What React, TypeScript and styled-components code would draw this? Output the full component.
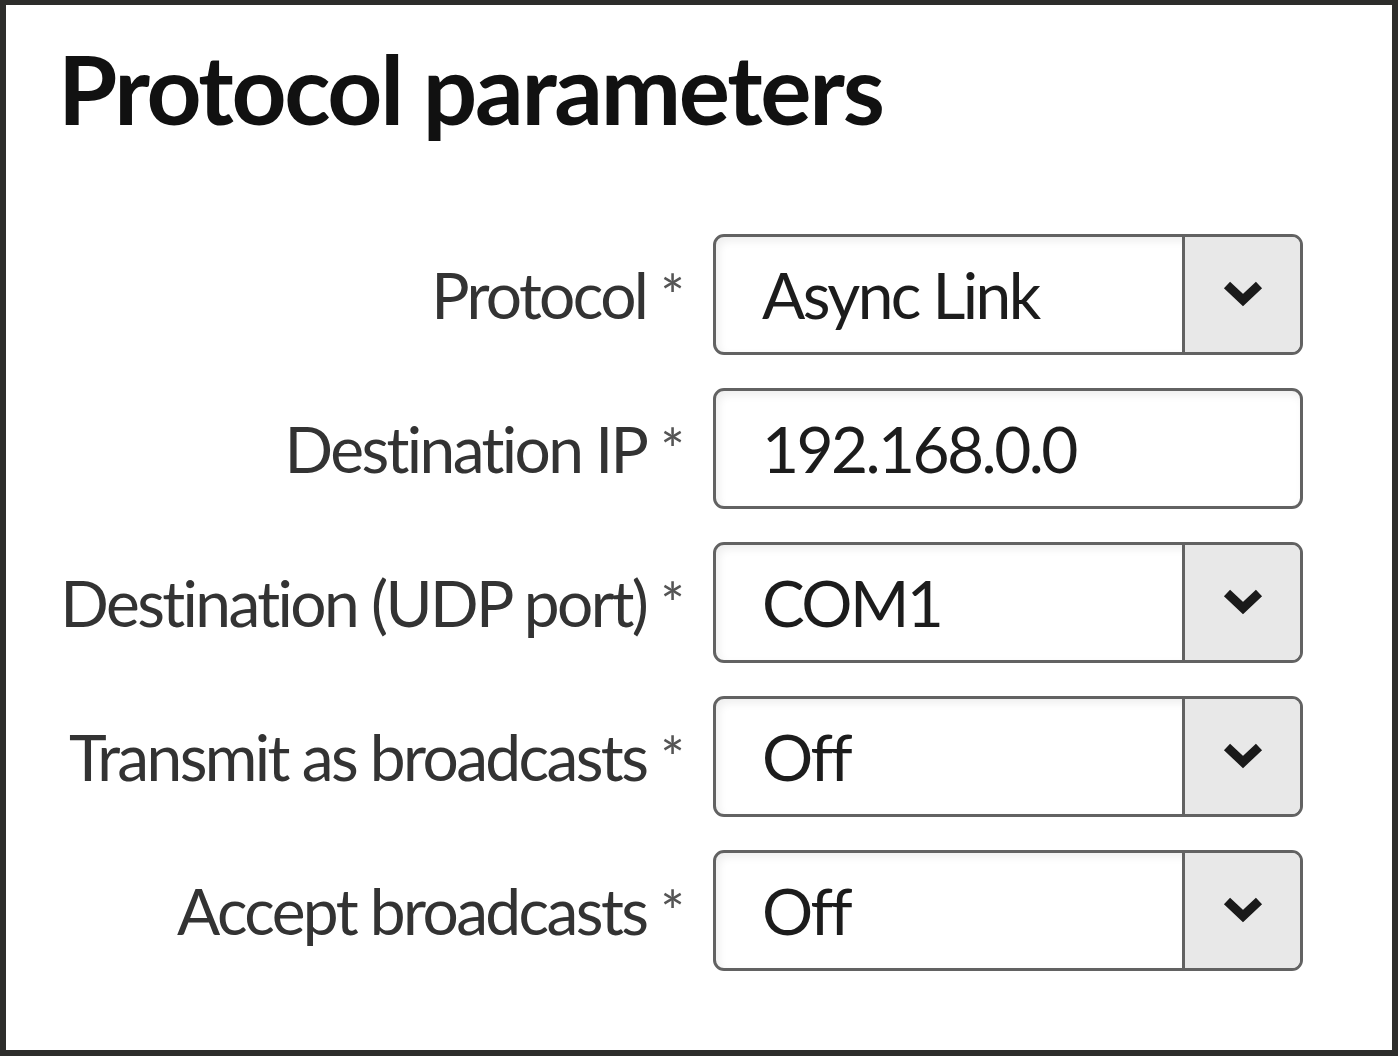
import React from "react"
import styled, { createGlobalStyle } from "styled-components"

const GlobalStyle = createGlobalStyle`
  html, body {
    margin: 0;
    padding: 0;
    background: #ffffff;
  }
  * {
    box-sizing: border-box;
  }
`

type Field = {
  label: string
  value: string
  select: boolean
}

const fields: Field[] = [
  { label: "Protocol", value: "Async Link", select: true },
  { label: "Destination IP", value: "192.168.0.0", select: false },
  { label: "Destination (UDP port)", value: "COM1", select: true },
  { label: "Transmit as broadcasts", value: "Off", select: true },
  { label: "Accept broadcasts", value: "Off", select: true },
]

function Chevron() {
  return (
    <svg width="42" height="30" viewBox="0 0 42 30">
      <polyline
        points="5,6 21,21 37,6"
        fill="none"
        stroke="#1a1a1a"
        strokeWidth="9"
        strokeLinejoin="miter"
      />
    </svg>
  )
}

function App() {
  return (
    <>
      <GlobalStyle />
      <Frame>
        <Title>Protocol parameters</Title>
        <Form>
          {fields.map((f) => (
            <React.Fragment key={f.label}>
              <Label>
                {f.label}
                <Required>*</Required>
              </Label>
              <InputBox>
                <Value>{f.value}</Value>
                {f.select && (
                  <DropButton>
                    <Chevron />
                  </DropButton>
                )}
              </InputBox>
            </React.Fragment>
          ))}
        </Form>
      </Frame>
    </>
  )
}

export default App

const Frame = styled.div`
  width: 1398px;
  height: 1056px;
  border: 6px solid #2d2d2b;
  border-top-width: 5px;
  padding: 35px 0 0 52px;
  font-family: Lato, "Liberation Sans", sans-serif;
  color: #222;
  background: #fff;
`
const Title = styled.h1`
  margin: 0;
  font-size: 96px;
  line-height: 96px;
  font-weight: 700;
  letter-spacing: -2.3px;
  color: #111;
`
const Form = styled.div`
  display: grid;
  grid-template-columns: 627px 590px;
  grid-auto-rows: 121px;
  column-gap: 28px;
  row-gap: 33px;
  margin-top: 98px;
  align-items: center;
`
const Label = styled.div`
  text-align: right;
  font-size: 64px;
  line-height: 1;
  letter-spacing: -2.6px;
  color: #333;
  white-space: nowrap;
`
const Required = styled.span`
  display: inline-block;
  margin-left: 14px;
  font-size: 58px;
  color: #555;
  vertical-align: 2px;
  letter-spacing: 0;
`
const InputBox = styled.div`
  display: flex;
  height: 121px;
  border: 3px solid #626262;
  border-radius: 11px;
  background: #fff;
  box-shadow: inset 3px 4px 8px rgba(0, 0, 0, 0.07);
  overflow: hidden;
`
const Value = styled.div`
  flex: 1;
  display: flex;
  align-items: center;
  padding-left: 46px;
  font-size: 64px;
  letter-spacing: -2.6px;
  color: #1c1c1c;
`
const DropButton = styled.div`
  width: 118px;
  display: flex;
  align-items: center;
  justify-content: center;
  border-left: 3px solid #626262;
  background: #e8e8e8;
  padding-bottom: 2px;
`
